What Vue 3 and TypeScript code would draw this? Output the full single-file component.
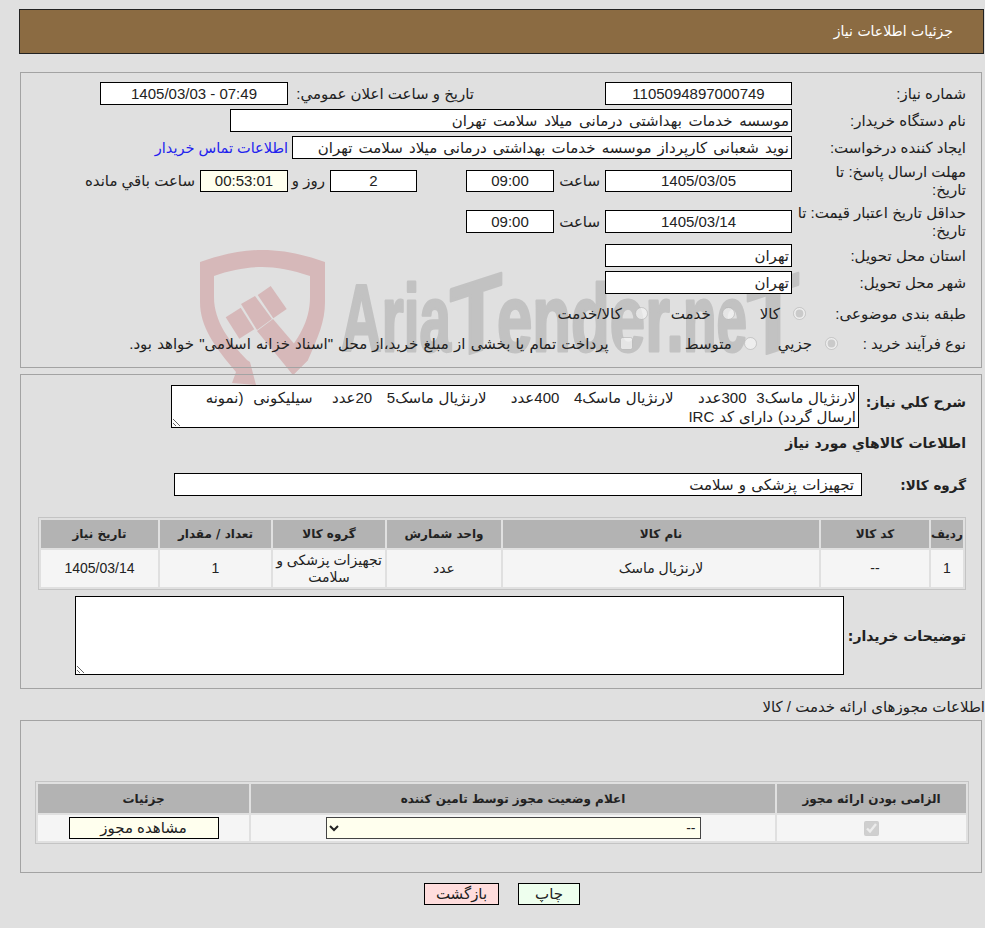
<script setup lang="ts">
const need = 'لارنژیال ماسک3  300عدد     لارنژیال ماسک4   400عدد     لارنژیال ماسک5   20عدد    سیلیکونی  (نمونه ارسال گردد) دارای کد IRC'
const goodsCols = [
  { t: 'ردیف', w: 32 }, { t: 'کد کالا', w: 108 }, { t: 'نام کالا', w: 316 }, { t: 'واحد شمارش', w: 114 },
  { t: 'گروه کالا', w: 112 }, { t: 'تعداد / مقدار', w: 111 }, { t: 'تاریخ نیاز', w: 117 }
]
const goodsRow = ['1', '--', 'لارنژیال ماسک', 'عدد', 'تجهیزات پزشکی و سلامت', '1', '1405/03/14']
</script>

<template>
  <div class="page" dir="rtl">
    <svg class="mark" width="700" height="150" viewBox="0 0 700 150" aria-hidden="true">
      <path class="shield" d="M0 15 C20 8 40 3 62 3 C85 3 105 8 125 15 V55 C125 75 118 90 108 113 L93 128 L82 113 C98 92 110 75 110 50 V29 C92 23 76 20 62 20 C48 20 30 23 14 29 V50 C14 75 30 95 47 113 L50 115 L56 138 L32 136 L36 125 C15 100 0 80 0 55 Z"/>
      <polygon class="shield" points="25.7,70.3 40.7,60.7 54.3,82.3 39.3,91.7"/>
      <polygon class="shield" points="41,57 55,49 72,72 57,83"/>
      <polygon class="shield" points="57.7,48 70.7,39 86.7,62 73.3,71.3"/>
      <polygon class="shield" points="57,84 73,72 108,113 93,128"/>
      <text class="mark-text" x="141" y="104" textLength="110" lengthAdjust="spacingAndGlyphs">Aria</text>
      <text class="mark-text tee" transform="translate(250 113) skewY(-18)" textLength="52" lengthAdjust="spacingAndGlyphs">T</text>
      <text class="mark-text" x="297" y="104" textLength="187" lengthAdjust="spacingAndGlyphs">ender.</text>
      <text class="mark-text" x="483" y="104" textLength="64" lengthAdjust="spacingAndGlyphs">ne</text>
      <text class="mark-text tee" transform="translate(547 113) skewY(-18)" textLength="52" lengthAdjust="spacingAndGlyphs">T</text>
    </svg>

    <header class="head">جزئیات اطلاعات نیاز</header>

    <section class="panel info">
      <div class="row">
        <label class="lab">شماره نیاز:</label>
        <div class="field w187">1105094897000749</div>
        <span class="lab-2 gap131">تاریخ و ساعت اعلان عمومي:</span>
        <div class="field w188">07:49 - 1405/03/03</div>
      </div>
      <div class="row">
        <label class="lab">نام دستگاه خریدار:</label>
        <div class="field start w562">موسسه خدمات بهداشتی درمانی میلاد سلامت تهران</div>
      </div>
      <div class="row">
        <label class="lab">ایجاد کننده درخواست:</label>
        <div class="field start w500">نوید شعبانی کارپرداز موسسه خدمات بهداشتی درمانی میلاد سلامت تهران</div>
        <a class="link">اطلاعات تماس خریدار</a>
      </div>
      <div class="row tall r4">
        <label class="lab two">مهلت ارسال پاسخ: تا<br />تاریخ:</label>
        <div class="field w187 h22">1405/03/05</div>
        <span class="txt hour">ساعت</span>
        <div class="field w88 h22">09:00</div>
        <div class="field w87 ms49 h22">2</div>
        <span class="txt day">روز و</span>
        <div class="field w88 remain h22">00:53:01</div>
        <span class="txt left">ساعت باقي مانده</span>
      </div>
      <div class="row tall r5">
        <label class="lab two">حداقل تاریخ اعتبار قیمت: تا<br />تاریخ:</label>
        <div class="field w187">1405/03/14</div>
        <span class="txt hour">ساعت</span>
        <div class="field w88">09:00</div>
      </div>
      <div class="row">
        <label class="lab">استان محل تحویل:</label>
        <div class="field start w187">تهران</div>
      </div>
      <div class="row">
        <label class="lab">شهر محل تحویل:</label>
        <div class="field start w187">تهران</div>
      </div>
      <div class="row r8">
        <label class="lab">طبقه بندی موضوعی:</label>
        <input class="rad r-a" type="radio" checked disabled name="cat" />
        <span class="txt">کالا</span>
        <input class="rad r-b" type="radio" disabled name="cat" />
        <span class="txt">خدمت</span>
        <input class="rad r-c" type="radio" disabled name="cat" />
        <span class="txt">کالا/خدمت</span>
      </div>
      <div class="row r9">
        <label class="lab">نوع فرآیند خرید :</label>
        <input class="rad r-d" type="radio" checked disabled name="proc" />
        <span class="txt">جزیي</span>
        <input class="rad r-e" type="radio" disabled name="proc" />
        <span class="txt">متوسط</span>
        <input class="rad r-f" type="checkbox" disabled />
        <span class="txt long">پرداخت تمام یا بخشی از مبلغ خرید،از محل "اسناد خزانه اسلامی" خواهد بود.</span>
      </div>
    </section>

    <section class="panel goods">
      <div class="row need">
        <label class="blab need-lab">شرح کلي نیاز:</label>
        <textarea class="area a-need" readonly :value="need"></textarea>
      </div>
      <h3 class="blab title">اطلاعات کالاهاي مورد نیاز</h3>
      <div class="row group">
        <label class="blab group-lab">گروه کالا:</label>
        <div class="field start w688">تجهیزات پزشکی و سلامت</div>
      </div>
      <table class="grid g1">
        <colgroup><col v-for="c in goodsCols" :key="c.t" :style="{ width: c.w + 'px' }" /></colgroup>
        <thead><tr><th v-for="c in goodsCols" :key="c.t">{{ c.t }}</th></tr></thead>
        <tbody><tr><td v-for="(v, i) in goodsRow" :key="i">{{ v }}</td></tr></tbody>
      </table>
      <div class="row notes">
        <label class="blab notes-lab">توضیحات خریدار:</label>
        <textarea class="area a-notes" readonly></textarea>
      </div>
    </section>

    <div class="perm-title">اطلاعات مجوزهای ارائه خدمت / کالا</div>

    <section class="panel perm">
      <table class="grid g2">
        <colgroup><col class="c1" /><col class="c2" /><col class="c3" /></colgroup>
        <thead><tr><th>الزامی بودن ارائه مجوز</th><th>اعلام وضعیت مجوز توسط تامین کننده</th><th>جزئیات</th></tr></thead>
        <tbody>
          <tr>
            <td><input class="check" type="checkbox" checked disabled /></td>
            <td><select class="sel"><option>--</option></select></td>
            <td><button class="btn view" type="button">مشاهده مجوز</button></td>
          </tr>
        </tbody>
      </table>
    </section>

    <div class="actions">
      <button class="btn print" type="button">چاپ</button>
      <button class="btn back" type="button">بازگشت</button>
    </div>
  </div>
</template>

<style>
html, body { margin: 0; background: #e0e0e0; }
</style>

<style scoped>
.page {
  position: relative;
  width: 985px;
  height: 928px;
  overflow: hidden;
  background: #e0e0e0;
  font-family: "Liberation Sans", "DejaVu Sans", sans-serif;
  font-size: 15px;
  color: #222;
  padding-top: 9px;
  box-sizing: border-box;
}
.mark { position: absolute; left: 200px; top: 247px; direction: ltr; }
.shield { fill: #d6b8b9; }
.mark-text {
  font-family: "Liberation Sans", sans-serif;
  font-weight: 700;
  font-size: 95px;
  fill: #c2c2c2;
  stroke: #c2c2c2;
  stroke-width: 3px;
  stroke-linejoin: round;
  direction: ltr;
}
.tee { font-size: 102px; }

.head {
  position: relative;
  box-sizing: border-box;
  width: 965px;
  height: 45px;
  margin-right: 1px;
  padding: 13px 30px 0 0;
  background: #8b6b42;
  border: 1px solid #222;
  color: #fff;
  font-family: "DejaVu Sans", sans-serif;
  font-size: 14px;
}
.panel {
  position: relative;
  box-sizing: border-box;
  width: 962px;
  margin-right: 3px;
  border: 1px solid #a3a3a3;
}
.info { height: 296px; margin-top: 18px; padding-top: 9px; }
.row { display: flex; align-items: center; min-height: 23px; margin-bottom: 4px; white-space: nowrap; }
.lab, .blab { display: block; }
.lab { box-sizing: border-box; width: 189px; padding-right: 15px; flex: none; }
.two { line-height: 18px; }
.tall { margin-bottom: 0; }
.r4 { margin-top: 11px; margin-bottom: 18px; height: 22px; min-height: 22px; }
.r5 { margin-bottom: 11px; height: 23px; }
.r8 { margin-top: 8px; margin-bottom: 7px; }
.field {
  box-sizing: border-box;
  height: 23px;
  flex: none;
  background: #fff;
  border: 1px solid #000;
  text-align: center;
  line-height: 21px;
  color: #222;
  font-size: 15px;
}
.h22 { height: 22px; line-height: 20px; }
.start { text-align: right; padding-right: 2px; word-spacing: 1px; }
.w187 { width: 187px; }
.w188 { width: 188px; margin-right: 5px; }
.w562 { width: 562px; word-spacing: 2.6px; }
.w500 { width: 500px; word-spacing: 2px; }
.w88 { width: 88px; }
.w87 { width: 87px; }
.w688 { width: 688px; padding-right: 7px; }
.gap131 { margin-right: 131px; width: 181px; }
.lab-2 { flex: none; }
.link { margin-right: 4px; color: #2222ee; font-size: 14.5px; }
.txt { flex: none; }
.long { word-spacing: 1px; }
.hour { width: 42px; margin-right: 5px; margin-left: 4px; }
.ms49 { margin-right: 49px; }
.day { margin: 0 5px; width: 32px; }
.remain { background: #ffffee; }
.left { margin-right: 5px; }
.rad { margin: 0; flex: none; width: 13px; height: 13px; }
.r-a { margin-right: -14px; margin-left: 13px; }
.r-b { margin-right: 25px; margin-left: 11px; }
.r-c { margin-right: 23px; margin-left: 13px; }
.r-d { margin-right: -46px; margin-left: 13px; }
.r-e { margin-right: 21px; margin-left: 12px; }
.r-f { margin-right: 52px; margin-left: 11px; }

.goods { height: 315px; margin-top: 6px; padding-top: 10px; }
.need { align-items: flex-start; margin: 0; }
.blab { font-family: "DejaVu Sans", sans-serif; font-weight: 700; font-size: 14px; color: #222; margin: 0; }
.need-lab { width: 122px; padding-right: 15px; box-sizing: border-box; flex: none; padding-top: 9px; }
.area {
  box-sizing: border-box;
  display: block;
  background: #fff;
  border: 1px solid #000;
  padding: 2px 2px 0;
  font: 15px/19px "Liberation Sans", "DejaVu Sans", sans-serif;
  word-spacing: 0.7px;
  color: #222;
  outline: none;
  direction: rtl;
}
.a-need { width: 688px; height: 43px; }
.title { padding-right: 15px; margin-top: 5px; line-height: 20px; }
.group { margin: 20px 0 0; }
.group-lab { width: 119px; padding-right: 15px; box-sizing: border-box; flex: none; font-size: 13.5px; }
.grid { border-collapse: separate; border-spacing: 2px; table-layout: fixed; border: 1px solid #c4c4c4; }
.grid th { background: #b3b3b3; font-family: "DejaVu Sans", sans-serif; font-size: 12px; font-weight: 700; color: #222; padding: 0; height: 28px; }
.grid td { background: #f5f5f5; font-size: 14px; text-align: center; padding: 0; height: 37px; color: #222; line-height: 17px; }
.g1 { width: 928px; margin: 21px 15px 0 0; }
.notes { margin: 6px 0 0; align-items: center; }
.notes-lab { width: 137px; padding-right: 15px; box-sizing: border-box; flex: none; }
.a-notes { width: 769px; height: 79px; }

.perm-title { margin-top: 8px; height: 23px; line-height: 20px; font-size: 15px; }
.perm { height: 153px; margin-top: 0; padding-top: 60px; }
.g2 { width: 933px; margin-right: 12px; }
.g2 .c1 { width: 189px; }
.g2 .c2 { width: 524px; }
.g2 .c3 { width: 211px; }
.g2 th { height: 29px; }
.g2 td { height: 26px; }
.check { margin: 0; width: 15px; height: 15px; vertical-align: middle; }
.sel {
  box-sizing: border-box;
  width: 375px;
  height: 22px;
  background: #ffffee;
  border: 1px solid #444;
  font: 14px "Liberation Sans", "DejaVu Sans", sans-serif;
  color: #222;
  direction: rtl;
  vertical-align: middle;
}
.btn {
  box-sizing: border-box;
  height: 22px;
  border: 1px solid #000;
  font: 15px "Liberation Sans", "DejaVu Sans", sans-serif;
  color: #222;
  padding: 0;
  vertical-align: middle;
}
.view { width: 150px; background: #ffffee; }
.actions { display: flex; justify-content: center; gap: 19px; margin-top: 10px; margin-left: 19px; }
.print { width: 62px; background: #eeffee; }
.back { width: 75px; background: #ffdddd; }
</style>
